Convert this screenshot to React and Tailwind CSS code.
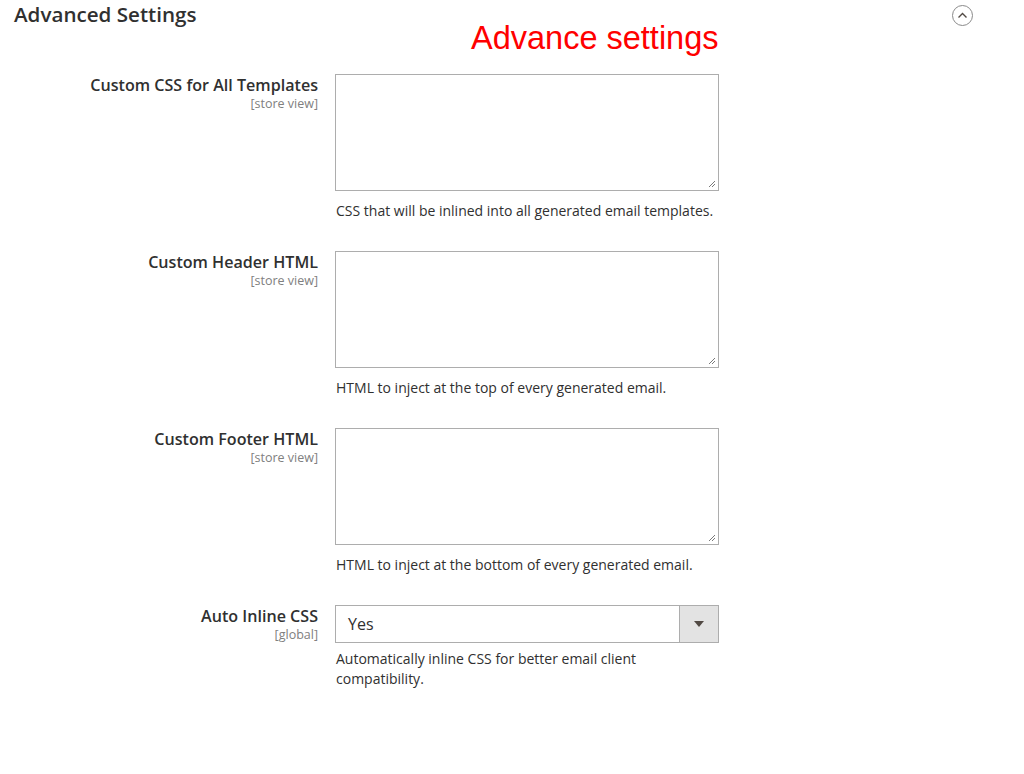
import React from 'react';

const fields = [
  { label: 'Custom CSS for All Templates', scope: '[store view]', note: 'CSS that will be inlined into all generated email templates.' },
  { label: 'Custom Header HTML', scope: '[store view]', note: 'HTML to inject at the top of every generated email.' },
  { label: 'Custom Footer HTML', scope: '[store view]', note: 'HTML to inject at the bottom of every generated email.' },
];

const ResizeGrip = () => (
  <svg className="absolute right-[2px] bottom-[2px]" width="9" height="9" viewBox="0 0 9 9">
    <path d="M8 2 L2 8 M8 5 L5 8" stroke="#7a7a7a" strokeWidth="1" fill="none" />
  </svg>
);

const Row = ({ label, scope, children }) => (
  <div className="flex">
    <div className="w-[318px] text-right pt-[1px]">
      <div className="text-[16.1px] leading-[20px] font-semibold text-[#303030]">{label}</div>
      <div className="text-[12.5px] leading-[16px] text-[#808080] mt-[1px]">{scope}</div>
    </div>
    <div className="ml-[17px] w-[384px]">{children}</div>
  </div>
);

export default function App() {
  return (
    <div className="relative w-[1024px] h-[774px] bg-white" style={{ fontFamily: '"Open Sans", "Noto Sans", sans-serif' }}>
      <div className="flex items-start justify-between h-[26px] pl-[14px] pr-[51px] pt-[2px]">
        <h2 className="text-[20.6px] leading-[24px] font-semibold text-[#303030]">Advanced Settings</h2>
        <button className="mt-[3px] w-[21px] h-[21px] rounded-full border border-[#8a8a8a] flex items-center justify-center">
          <svg width="11" height="7" viewBox="0 0 11 7">
            <path d="M1.5 5.5 L5.5 1.5 L9.5 5.5" stroke="#514943" strokeWidth="1.4" fill="none" />
          </svg>
        </button>
      </div>

      <div
        className="absolute left-[471px] top-[19px] text-[32.5px] leading-[38px] text-[#ff0000]"
        style={{ fontFamily: '"Liberation Sans", Arial, sans-serif' }}
      >
        Advance settings
      </div>

      <div className="mt-[48px] flex flex-col gap-[30px]">
        {fields.map((f) => (
          <Row key={f.label} label={f.label} scope={f.scope}>
            <div className="relative h-[117px] border border-[#adadad] bg-white">
              <textarea className="block w-full h-full resize-none outline-none p-2 text-sm" />
              <ResizeGrip />
            </div>
            <div className="mt-[10px] pl-[1px] text-[14px] leading-[20px] text-[#303030]">{f.note}</div>
          </Row>
        ))}

        <Row label="Auto Inline CSS" scope="[global]">
          <div className="flex h-[38px] border border-[#adadad]">
            <div className="flex-1 flex items-center pl-[12px] text-[16px] text-[#303030]">Yes</div>
            <div className="w-[39px] bg-[#e3e3e3] border-l border-[#adadad] flex items-center justify-center">
              <svg width="10" height="6" viewBox="0 0 10 6">
                <path d="M0 0 L10 0 L5 6 Z" fill="#514943" />
              </svg>
            </div>
          </div>
          <div className="mt-[6px] pl-[1px] text-[14px] leading-[20px] text-[#303030] w-[320px]">
            Automatically inline CSS for better email client compatibility.
          </div>
        </Row>
      </div>
    </div>
  );
}
